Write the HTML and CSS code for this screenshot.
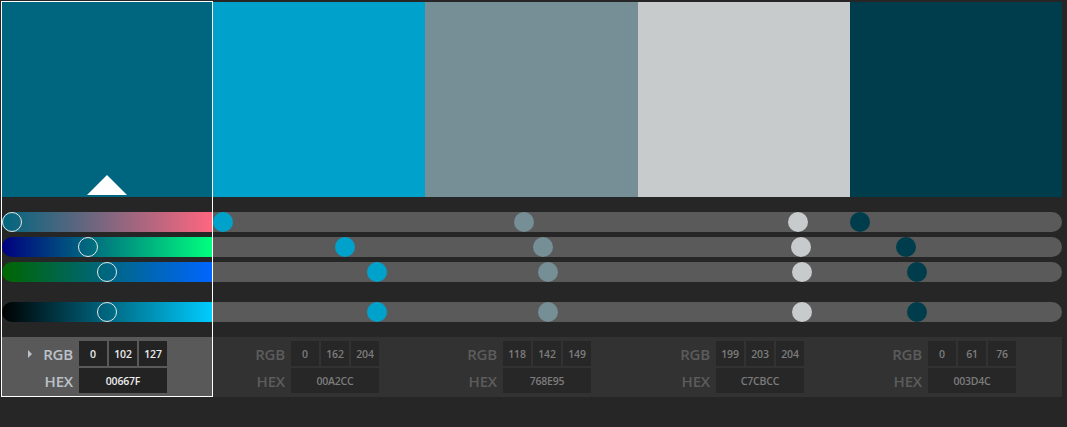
FILE: index.html
```html
<!DOCTYPE html>
<html>
<head>
<meta charset="utf-8">
<link rel="stylesheet" href="styles.css">
</head>
<body>
<div class="palette">
  <div class="col selected" style="--c:#00667F">
    <div class="swatch"><span class="pointer"></span></div>
    <div class="sliders">
      <div class="track grad-r"><span class="knob" style="--v:0"></span></div>
      <div class="track grad-g"><span class="knob" style="--v:0.4"></span></div>
      <div class="track grad-b"><span class="knob" style="--v:0.498"></span></div>
      <div class="track grad-v spaced"><span class="knob" style="--v:0.498"></span></div>
    </div>
    <div class="info">
      <div class="row"><span class="label"><span class="caret"></span>RGB</span><span class="box">0</span><span class="box">102</span><span class="box">127</span></div>
      <div class="row"><span class="label">HEX</span><span class="box wide">00667F</span></div>
    </div>
  </div>
  <div class="col" style="--c:#00A2CC">
    <div class="swatch"></div>
    <div class="sliders">
      <div class="track"><span class="knob" style="--v:0"></span></div>
      <div class="track"><span class="knob" style="--v:0.635"></span></div>
      <div class="track"><span class="knob" style="--v:0.8"></span></div>
      <div class="track spaced"><span class="knob" style="--v:0.8"></span></div>
    </div>
    <div class="info">
      <div class="row"><span class="label">RGB</span><span class="box">0</span><span class="box">162</span><span class="box">204</span></div>
      <div class="row"><span class="label">HEX</span><span class="box wide">00A2CC</span></div>
    </div>
  </div>
  <div class="col" style="--c:#768E95">
    <div class="swatch"></div>
    <div class="sliders">
      <div class="track"><span class="knob" style="--v:0.463"></span></div>
      <div class="track"><span class="knob" style="--v:0.557"></span></div>
      <div class="track"><span class="knob" style="--v:0.584"></span></div>
      <div class="track spaced"><span class="knob" style="--v:0.584"></span></div>
    </div>
    <div class="info">
      <div class="row"><span class="label">RGB</span><span class="box">118</span><span class="box">142</span><span class="box">149</span></div>
      <div class="row"><span class="label">HEX</span><span class="box wide">768E95</span></div>
    </div>
  </div>
  <div class="col" style="--c:#C7CBCC">
    <div class="swatch"></div>
    <div class="sliders">
      <div class="track"><span class="knob" style="--v:0.780"></span></div>
      <div class="track"><span class="knob" style="--v:0.796"></span></div>
      <div class="track"><span class="knob" style="--v:0.8"></span></div>
      <div class="track spaced"><span class="knob" style="--v:0.8"></span></div>
    </div>
    <div class="info">
      <div class="row"><span class="label">RGB</span><span class="box">199</span><span class="box">203</span><span class="box">204</span></div>
      <div class="row"><span class="label">HEX</span><span class="box wide">C7CBCC</span></div>
    </div>
  </div>
  <div class="col last" style="--c:#003D4C">
    <div class="swatch"></div>
    <div class="sliders">
      <div class="track"><span class="knob" style="--v:0"></span></div>
      <div class="track"><span class="knob" style="--v:0.239"></span></div>
      <div class="track"><span class="knob" style="--v:0.298"></span></div>
      <div class="track spaced"><span class="knob" style="--v:0.298"></span></div>
    </div>
    <div class="info">
      <div class="row"><span class="label">RGB</span><span class="box">0</span><span class="box">61</span><span class="box">76</span></div>
      <div class="row"><span class="label">HEX</span><span class="box wide">003D4C</span></div>
    </div>
  </div>
</div>
</body>
</html>
```
FILE: styles.css
```css
html, body {
  margin: 0;
  padding: 0;
  background: #262626;
  font-family: "Open Sans", "Liberation Sans", sans-serif;
}

.palette {
  display: grid;
  grid-template-columns: 212px 212px 213px 212px 212px;
  margin: 2px 0 0 1px;
  width: 1061px;
}

.col {
  display: flex;
  flex-direction: column;
  position: relative;
}

.swatch {
  height: 195px;
  background: var(--c);
  display: flex;
  justify-content: center;
  align-items: flex-end;
}

.pointer {
  width: 0;
  height: 0;
  border-left: 20px solid transparent;
  border-right: 20px solid transparent;
  border-bottom: 20px solid #ffffff;
  margin-bottom: 2px;
}

.sliders {
  display: flex;
  flex-direction: column;
  gap: 5px;
  margin-top: 15px;
}

.track {
  position: relative;
  height: 20px;
  background: #5a5a5a;
}

.track.spaced {
  margin-top: 15px;
}

.selected .track {
  margin: 0 1px;
  border-radius: 10px 0 0 10px;
}

.selected .track.spaced {
  margin-top: 15px;
}

.last .track {
  border-radius: 0 10px 10px 0;
}

.grad-r { background: linear-gradient(to right, #00667F, #FF667F); }
.grad-g { background: linear-gradient(to right, #00007F, #00FF7F); }
.grad-b { background: linear-gradient(to right, #006600, #0066FF); }
.grad-v { background: linear-gradient(to right, #000000, #00CCFF); }

.knob {
  position: absolute;
  top: 0;
  left: calc(var(--v) * (100% - 20px));
  width: 20px;
  height: 20px;
  border-radius: 50%;
  background: var(--c);
  box-sizing: border-box;
}

.selected .knob {
  background: transparent;
  border: 1.5px solid #e6e6e6;
}

.info {
  margin-top: 15px;
  height: 60px;
  box-sizing: border-box;
  padding-top: 4px;
  background: #323232;
  display: flex;
  flex-direction: column;
  gap: 2px;
}

.selected .info {
  background: #595959;
}

.row {
  display: flex;
  align-items: center;
  gap: 2px;
}

.label {
  width: 72px;
  margin-right: 4px;
  display: flex;
  justify-content: flex-end;
  align-items: center;
  font-size: 15px;
  font-weight: 600;
  color: #5c5c5c;
  letter-spacing: -0.2px;
}

.selected .label {
  color: #bcc1c8;
}

.caret {
  width: 0;
  height: 0;
  border-top: 4px solid transparent;
  border-bottom: 4px solid transparent;
  border-left: 4px solid #bcc1c8;
  margin-right: 11px;
}

.box {
  width: 28px;
  height: 25px;
  background: #272727;
  color: #7c7c7c;
  font-size: 10.5px;
  font-weight: 600;
  letter-spacing: -0.2px;
  display: flex;
  align-items: center;
  justify-content: center;
}

.box.wide {
  width: 88px;
}

.selected .box {
  background: #232323;
  color: #ececec;
}

.selected::after {
  content: "";
  position: absolute;
  left: 0;
  right: 0;
  top: -1px;
  bottom: 0;
  border: 1px solid #ffffff;
  pointer-events: none;
}
```
